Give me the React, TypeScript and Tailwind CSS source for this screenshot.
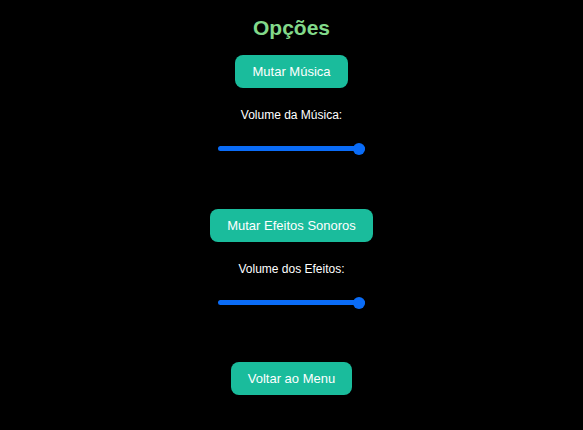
import React from 'react'

const sliderClass =
  'block w-[147px] h-[5px] appearance-none rounded-full bg-[#0a6cf7] outline-none cursor-pointer ' +
  '[&::-webkit-slider-thumb]:appearance-none [&::-webkit-slider-thumb]:w-[12px] [&::-webkit-slider-thumb]:h-[12px] ' +
  '[&::-webkit-slider-thumb]:rounded-full [&::-webkit-slider-thumb]:bg-[#0a6cf7] [&::-webkit-slider-thumb]:border-0'

function TealButton({ children, onClick }: { children: React.ReactNode; onClick?: () => void }) {
  return (
    <button
      type="button"
      onClick={onClick}
      className="h-[33px] px-[17px] rounded-[8px] bg-[#1abc9c] text-white text-[13px] leading-none cursor-pointer"
    >
      {children}
    </button>
  )
}

export default function App() {
  const [music, setMusic] = React.useState(100)
  const [effects, setEffects] = React.useState(100)
  const [musicMuted, setMusicMuted] = React.useState(false)
  const [effectsMuted, setEffectsMuted] = React.useState(false)

  return (
    <div
      className="w-full min-h-[430px] bg-black text-white flex flex-col items-center pt-[16px]"
      style={{ fontFamily: '"Liberation Sans", Arial, sans-serif' }}
    >
      <h1 className="text-[21px] leading-[24px] font-bold text-[#82d98a]">Opções</h1>

      <div className="mt-[15px]">
        <TealButton onClick={() => setMusicMuted(!musicMuted)}>
          {musicMuted ? 'Ativar Música' : 'Mutar Música'}
        </TealButton>
      </div>
      <label className="mt-[20px] text-[12px] leading-[14px]">Volume da Música:</label>
      <input
        type="range"
        min={0}
        max={100}
        value={music}
        onChange={(e) => setMusic(Number(e.target.value))}
        className={`mt-[24px] ${sliderClass}`}
      />

      <div className="mt-[58px]">
        <TealButton onClick={() => setEffectsMuted(!effectsMuted)}>
          {effectsMuted ? 'Ativar Efeitos Sonoros' : 'Mutar Efeitos Sonoros'}
        </TealButton>
      </div>
      <label className="mt-[20px] text-[12px] leading-[14px]">Volume dos Efeitos:</label>
      <input
        type="range"
        min={0}
        max={100}
        value={effects}
        onChange={(e) => setEffects(Number(e.target.value))}
        className={`mt-[24px] ${sliderClass}`}
      />

      <div className="mt-[57px]">
        <TealButton>Voltar ao Menu</TealButton>
      </div>
    </div>
  )
}
